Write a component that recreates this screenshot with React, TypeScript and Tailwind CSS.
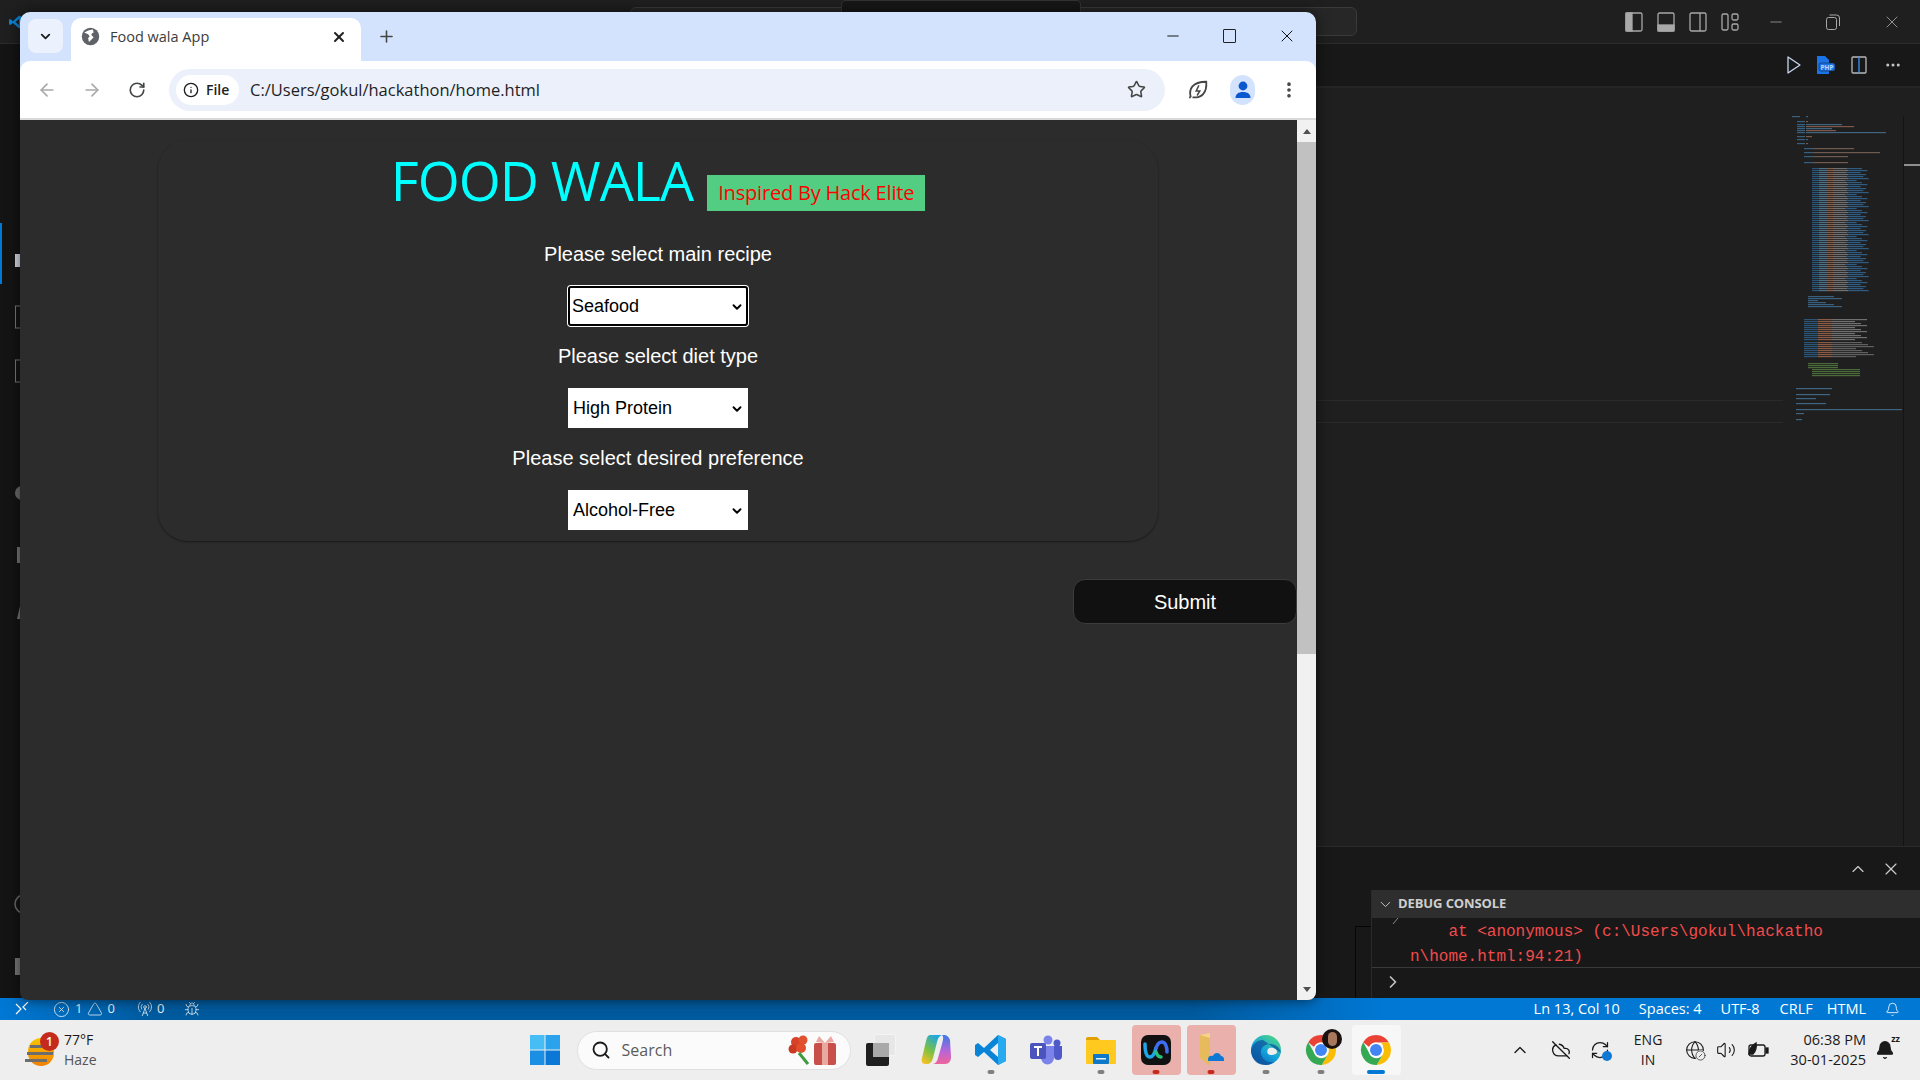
import { ArrowLeft, ArrowRight, RotateCw, Info, Star, X, Plus, ChevronDown, ChevronUp, ChevronRight, Minus, MoreVertical, MoreHorizontal, Search, Bell, CloudOff, RefreshCw, Globe, Volume2, Triangle, XCircle, RadioTower, Bug, CircleSlash } from "lucide-react";

const ui = "font-['Open_Sans',sans-serif]";

function ChromeLogo({ size = 36 }: { size?: number }) {
  return (
    <svg width={size} height={size} viewBox="0 0 48 48">
      <path d="M24 4a20 20 0 0 1 17.3 10H24a10 10 0 0 0-9.2 6L6.9 13.700A20 20 0 0 1 24 4z" fill="#ea4335" />
      <path d="M41.300 14A20 20 0 0 1 25 44l8.600-15A10 10 0 0 0 33.500 21 10 10 0 0 0 31 14z" fill="#fbbc04" />
      <path d="M6.900 13.700A20 20 0 0 0 25 44l8.600-15A10 10 0 0 1 15 28z" fill="#34a853" />
      <circle cx="24" cy="24" r="10" fill="#fff" />
      <circle cx="24" cy="24" r="8" fill="#4285f4" />
    </svg>
  );
}

function Minimap() {
  const rows: React.ReactNode[] = [];
  const bar = (x: number, y: number, w: number, c: string) => <rect key={`${x}-${y}-${c}`} x={x} y={y} width={w} height="1.2" fill={c} />;
  const widths = [14, 10, 18, 12, 16, 9, 20, 13, 11, 17, 15, 8, 19, 12];
  // header block
  [[0, 14], [5, 8], [8, 50], [10, 62], [12, 40], [14, 44], [16, 94], [20, 20], [23, 12], [27, 6]].forEach(([y, w], i) => {
    rows.push(bar(i < 1 ? 0 : 5, y, 8, "#3a6080"));
    rows.push(bar(14, y, Math.max(w - 14, 2), i % 2 ? "#7d5848" : "#3f6580"));
  });
  [[32, 40], [36, 66], [40, 34], [46, 34]].forEach(([y, w]) => {
    rows.push(bar(12, y, 10, "#3a6080"));
    rows.push(bar(22, y, w, "#6f5a50"));
  });
  // main option table
  for (let y = 52; y < 176; y += 2) {
    const w = widths[y % 14];
    rows.push(bar(20, y, 7, "#2b5577"));
    rows.push(bar(27, y, 8, "#4f7085"));
    rows.push(bar(35, y, 6, "#8a5c48"));
    rows.push(bar(41, y, 9 + w / 3, "#707070"));
    rows.push(bar(50 + w / 3, y, w, "#2f5c80"));
  }
  // lower blocks
  for (let y = 180; y < 192; y += 2) rows.push(bar(16, y, 10 + (y % 8) * 4, "#3a6080"));
  for (let y = 203; y < 224; y += 2) {
    rows.push(bar(12, y, 14, "#2b5577"));
    rows.push(bar(26, y, 14, "#8a5c48"));
    rows.push(bar(40, y, 20 + (y % 6) * 3, "#707070"));
  }
  for (let y = 226; y < 242; y += 2) {
    rows.push(bar(12, y, 14, "#2b5577"));
    rows.push(bar(26, y, 14, "#8a5c48"));
    rows.push(bar(40, y, 24 + (y % 8) * 3, "#606060"));
  }
  for (let y = 247; y < 261; y += 2) rows.push(bar(y < 253 ? 16 : 20, y, y < 253 ? 30 : 48, "#4c6b3a"));
  [[272, 36], [278, 34], [282, 20], [287, 30], [293, 106], [297, 8], [303, 6]].forEach(([y, w]) => rows.push(bar(4, y, w, "#3f6580")));
  return (
    <svg width="111" height="306" viewBox="0 0 111 306">
      {rows}
    </svg>
  );
}

function ActivitySlivers() {
  return (
    <svg width="20" height="954" viewBox="0 0 20 954" className="shrink-0">
      <rect x="0" y="179" width="2" height="61" fill="#0078d4" />
      <rect x="15" y="210" width="5" height="13" fill="#d7dbe6" />
      <rect x="15.500" y="262" width="5" height="22" fill="none" stroke="#7a7a7a" />
      <rect x="15.500" y="316" width="5" height="22" fill="none" stroke="#7a7a7a" />
      <circle cx="22" cy="449" r="7" fill="#6d6d6d" />
      <rect x="17" y="503" width="3" height="16" fill="#7a7a7a" />
      <path d="M20 562l-3 13h3z" fill="#7a7a7a" />
      <circle cx="24" cy="860" r="9" fill="none" stroke="#6d6d6d" strokeWidth="1.5" />
      <rect x="15" y="914" width="5" height="17" fill="#7a7a7a" />
    </svg>
  );
}

function TaskIcon({ children, dot, hi, active }: { children: React.ReactNode; dot?: string; hi?: boolean; active?: boolean }) {
  return (
    <div className="w-[55px] flex justify-center">
      <div className={`relative w-[49px] h-[50px] flex items-center justify-center rounded-[4px] ${hi ? "bg-[#e9b0ac]" : ""} ${active ? "bg-[#f7f7f7]" : ""}`}>
        {children}
        {dot && <span className={`absolute bottom-[1px] left-1/2 -translate-x-1/2 h-[4px] rounded-full ${active ? "w-[18px]" : "w-[7px]"} ${dot}`} />}
      </div>
    </div>
  );
}

function Field({ label, value, options, focused }: { label: string; value: string; options: string[]; focused?: boolean }) {
  return (
    <div className="flex flex-col items-center">
      <label className="text-[20px] leading-[23px] text-white">{label}</label>
      <div className="relative mt-[20px] w-[180px] h-[40px]">
        <select
          defaultValue={value}
          className={`appearance-none w-full h-full bg-white text-black text-[18px] outline-none ${focused ? "border-2 border-black rounded-[3px] ring-1 ring-white pl-[2px]" : "border-0 pl-[5px]"}`}
        >
          {options.map((o) => (
            <option key={o}>{o}</option>
          ))}
        </select>
        <ChevronDown size={14} strokeWidth={3.2} className="absolute right-[4px] top-[14px] text-black pointer-events-none" />
      </div>
    </div>
  );
}

function BrowserWindow() {
  return (
    <div className="absolute left-[20px] top-[12px] w-[1296px] h-[988px] flex flex-col rounded-t-[10px] rounded-b-[8px] overflow-hidden shadow-[0_0_14px_rgba(0,0,0,0.6)]">
      {/* tab strip */}
      <div className={`h-[49px] shrink-0 bg-[#d3e3fd] flex items-start ${ui}`}>
        <div className="ml-[8px] mt-[7px] w-[35px] h-[34px] rounded-[8px] bg-[#ebf1fd] flex items-center justify-center">
          <ChevronDown size={15} strokeWidth={3} className="text-[#1f1f1f]" />
        </div>
        <div className="ml-[8px] mt-[6px] w-[290px] h-[43px] rounded-t-[10px] bg-white flex items-center pl-[10px] pr-[14px] pb-[6px]">
          <svg width="19" height="19" viewBox="0 0 24 24">
            <circle cx="12" cy="12" r="11" fill="#5f6368" />
            <path d="M4 7l5 2 2 3-2 2 1 5 3-3 3-3-3-3 1-2 2-1-1-4-5 1z" fill="#fff" />
          </svg>
          <span className="ml-[10px] flex-1 text-[14.500px] text-[#3c3c3c]">Food wala App</span>
          <X size={16} strokeWidth={3} className="text-[#1f1f1f]" />
        </div>
        <Plus size={19} strokeWidth={2} className="ml-[16px] mt-[15px] text-[#444746]" />
        <div className="flex-1" />
        <div className="flex items-center mt-[14px] mr-[19px] gap-[41px] text-[#111]">
          <Minus size={18} strokeWidth={1.300} />
          <div className="w-[13px] h-[14px] border border-[#222] rounded-[1px]" />
          <X size={20} strokeWidth={1.200} />
        </div>
      </div>
      {/* toolbar */}
      <div className="h-[59px] shrink-0 bg-[#d3e3fd]">
        <div className={`h-full bg-white rounded-t-[10px] border-b-2 border-[#dadada] flex items-center ${ui}`}>
          <ArrowLeft size={20} className="ml-[17px] text-[#a9a9a9]" />
          <ArrowRight size={20} className="ml-[25px] text-[#a9a9a9]" />
          <RotateCw size={18} strokeWidth={2.200} className="ml-[26px] text-[#444746]" />
          <div className="ml-[23px] w-[996px] h-[42px] rounded-full bg-[#ebf0fa] flex items-center pl-[7px] pr-[19px]">
            <div className="w-[63px] h-[30px] rounded-full bg-white flex items-center pl-[7px]">
              <Info size={16} className="text-[#1f1f1f]" />
              <span className="ml-[7px] text-[14px] font-semibold text-[#1f1f1f]">File</span>
            </div>
            <span className="ml-[11px] pt-[1px] flex-1 text-[16.500px] text-[#1f1f1f]">C:/Users/gokul/hackathon/home.html</span>
            <Star size={19} strokeWidth={2} className="text-[#444746]" />
          </div>
          <svg width="22" height="22" viewBox="0 0 24 24" fill="none" stroke="#444746" strokeWidth="2" className="ml-[22px]">
            <path d="M3 21c0-1 1-2 1-2C2 12 5 3 21 3c1 12-5 18-15 17" />
            <path d="M13 7l-3 6h4l-3 5" strokeWidth="1.600" />
          </svg>
          <div className="ml-[21px] w-[25px] h-[30px] rounded-full bg-[#d3e3fd] flex items-center justify-center">
            <svg width="18" height="20" viewBox="0 0 18 20" fill="#0b57d0">
              <circle cx="9" cy="6" r="4.400" />
              <path d="M1.500 18c0-4 3-6 7.500-6s7.500 2 7.500 6z" />
            </svg>
          </div>
          <MoreVertical size={20} strokeWidth={2.400} className="ml-[24px] text-[#444746]" />
        </div>
      </div>
      {/* page */}
      <div className="flex-1 min-h-0 flex bg-[#2c2c2c] font-['Liberation_Sans',sans-serif]">
        <div className="w-[1277px] pt-[20px]">
          <div className="ml-[138px] w-[1000px] h-[401px] rounded-[30px] shadow-[0_1px_2px_rgba(0,0,0,0.45)] flex flex-col items-center pt-[9px]">
            <div className="flex items-end gap-[14px]">
              <h1 className="font-['Open_Sans',sans-serif] text-[54px] leading-[62px] text-[#00ffff] tracking-[-1px]">FOOD WALA</h1>
              <span className="mb-[0px] w-[218px] h-[36px] bg-[#52cd82] flex items-center justify-center font-['Open_Sans',sans-serif] text-[20px] text-[#ff0000] tracking-[-0.200px]">
                Inspired By Hack Elite
              </span>
            </div>
            <div className="mt-[32px] flex flex-col gap-[19px] items-center">
              <Field label="Please select main recipe" value="Seafood" options={["Seafood", "Chicken", "Vegetarian"]} focused />
              <Field label="Please select diet type" value="High Protein" options={["High Protein", "Low Carb", "Balanced"]} />
              <Field label="Please select desired preference" value="Alcohol-Free" options={["Alcohol-Free", "Gluten-Free", "Dairy-Free"]} />
            </div>
          </div>
          <div className="mt-[38px] flex justify-end">
            <button className="w-[224px] h-[45px] rounded-[12px] bg-[#111111] border border-[#3c3c3c] text-white text-[20px]">Submit</button>
          </div>
        </div>
        <div className="w-[19px] bg-[#f1f1f1] flex flex-col items-center">
          <div className="h-[22px] flex items-center">
            <div className="w-0 h-0 border-x-[4px] border-x-transparent border-b-[5px] border-b-[#505050]" />
          </div>
          <div className="w-full h-[512px] bg-[#c1c1c1]" />
          <div className="flex-1" />
          <div className="h-[22px] flex items-center">
            <div className="w-0 h-0 border-x-[4px] border-x-transparent border-t-[5px] border-t-[#505050]" />
          </div>
        </div>
      </div>
    </div>
  );
}

export default function App() {
  return (
    <div className={`relative w-[1920px] h-[1080px] overflow-hidden flex flex-col bg-[#1f1f1f] ${ui}`}>
      {/* vscode title bar */}
      <div className="h-[44px] shrink-0 bg-[#1f1f1f] border-b border-[#2b2b2b] flex items-center relative">
        <svg width="14" height="14" viewBox="0 0 32 32" className="ml-[9px]">
          <path d="M23 1l8 4v22l-8 4L9 18l-6 5-3-2V11l3-2 6 5zM23 9l-8 7 8 7z" fill="#0a84d6" />
        </svg>
        <div className="absolute left-[630px] top-[7px] w-[727px] h-[29px] rounded-[6px] bg-[#272727] border border-[#3a3a3a]" />
        <div className="absolute left-[841px] top-0 w-[240px] h-[16px] rounded-[4px] bg-[#171717] border border-[#333]" />
        <div className="ml-auto flex items-center h-full text-[#a8a8a8]">
          <div className="flex items-center gap-[14px] mr-[28px]">
            <svg width="18" height="20" viewBox="0 0 18 20" fill="none" stroke="#a8a8a8" strokeWidth="1.300"><rect x="1" y="1" width="16" height="18" rx="1.500" /><rect x="1" y="1" width="6" height="18" fill="#a8a8a8" /></svg>
            <svg width="18" height="20" viewBox="0 0 18 20" fill="none" stroke="#a8a8a8" strokeWidth="1.300"><rect x="1" y="1" width="16" height="18" rx="1.500" /><rect x="1" y="13" width="16" height="6" fill="#a8a8a8" /></svg>
            <svg width="18" height="20" viewBox="0 0 18 20" fill="none" stroke="#a8a8a8" strokeWidth="1.300"><rect x="1" y="1" width="16" height="18" rx="1.500" /><path d="M11 1v18" /></svg>
            <svg width="18" height="20" viewBox="0 0 18 20" fill="none" stroke="#a8a8a8" strokeWidth="1.300"><rect x="1" y="2" width="6" height="16" rx="1.500" /><rect x="11" y="2" width="6" height="6" rx="1.500" /><rect x="11" y="12" width="6" height="6" rx="1.500" /></svg>
          </div>
          <Minus size={18} strokeWidth={1} className="mr-[41px]" />
          <svg width="14" height="16" viewBox="0 0 14 16" fill="none" stroke="#a8a8a8" className="mr-[42px]"><rect x="0.500" y="3.500" width="10" height="12" rx="2" /><path d="M3.500 1h7a3 3 0 0 1 3 3v8" /></svg>
          <X size={20} strokeWidth={1} className="mr-[18px]" />
        </div>
      </div>
      {/* vscode body */}
      <div className="flex-1 min-h-0 flex bg-[#141414]">
        <ActivitySlivers />
        <div className="flex-1 min-w-0 flex flex-col">
          <div className="h-[44px] shrink-0 bg-[#181818] border-b-2 border-[#252525] flex items-center justify-end pr-[18px] text-[#c5c5c5]">
            <svg width="16" height="20" viewBox="0 0 16 20" fill="none" stroke="#c8d8f0" strokeWidth="1.300" strokeLinejoin="round"><path d="M2 2l12 8-12 8z" /></svg>
            <svg width="20" height="20" viewBox="0 0 20 20" className="ml-[14px]">
              <path d="M1 1h8l4 4v14H1z" fill="#1a73e8" />
              <rect x="3" y="8" width="16" height="8" rx="2" fill="#1a73e8" stroke="#181818" strokeWidth="0.500" />
              <text x="11" y="14.500" fontSize="6.500" fontWeight="700" textAnchor="middle" fill="#bcd8ff">PHP</text>
            </svg>
            <svg width="16" height="18" viewBox="0 0 16 18" fill="none" stroke="#b8b8b8" strokeWidth="1.300" className="ml-[15px]"><rect x="1" y="1" width="14" height="16" rx="1" /><path d="M8 1v16" stroke="#3794ff" /></svg>
            <MoreHorizontal size={18} className="ml-[17px]" />
          </div>
          <div className="flex-1 min-h-0 bg-[#1f1f1f] flex justify-end relative">
            <div className="absolute left-0 right-[137px] top-[312px] h-[23px] border-y border-[#2a2a2a]" />
            <div className="pt-[28px]"><Minimap /></div>
            <div className="w-[17px] border-l border-[#141414] mt-[28px]">
              <div className="mt-[48px] h-[2px] bg-[#8f8f8f]" />
            </div>
          </div>
          <div className="h-[152px] shrink-0 bg-[#181818] border-t border-[#2b2b2b] flex flex-col">
            <div className="h-[43px] flex items-center justify-end gap-[13px] pr-[19px] text-[#cccccc]">
              <ChevronUp size={20} strokeWidth={1.400} />
              <X size={20} strokeWidth={1.400} />
            </div>
            <div className="flex-1 flex min-h-0">
              <div className="w-[1351px] shrink-0 flex justify-end pt-[36px]">
                <div className="w-[16px] border-l border-t border-[#050505]" />
              </div>
              <div className="flex-1 min-w-0 flex flex-col border-l border-[#2b2b2b]">
                <div className="h-[28px] shrink-0 bg-[#2e2e2e] flex items-center pl-[5px]">
                  <ChevronDown size={17} strokeWidth={1.400} className="text-[#c5c5c5]" />
                  <span className="ml-[4px] text-[13px] font-bold tracking-[-0.100px] text-[#cfcfcf]">DEBUG CONSOLE</span>
                </div>
                <div className="relative h-[50px] shrink-0 border-b border-[#3a3a3a] pl-[38px] pt-[2px] font-['Liberation_Mono',monospace] text-[16px] leading-[25px] text-[#f14c4c] whitespace-pre">
                  <svg width="8" height="8" viewBox="0 0 8 8" fill="none" stroke="#8a8a8a" className="absolute left-[20px] top-0"><path d="M6 0L1 6" /></svg>
                  {"    at <anonymous> (c:\\Users\\gokul\\hackatho"}
                  <br />
                  {"n\\home.html:94:21)"}
                </div>
                <div className="flex-1 flex items-center pl-[11px] pb-[2px]">
                  <ChevronRight size={20} strokeWidth={2} className="text-[#c5c5c5]" />
                </div>
              </div>
            </div>
          </div>
        </div>
      </div>
      {/* vscode status bar */}
      <div className="h-[22px] shrink-0 bg-[linear-gradient(90deg,#0078d4_0%,#005a9e_8%,#005a9e_62%,#0078d4_72%,#0078d4_100%)] flex items-center text-[13px] text-[#e6f0f8]">
        <svg width="14" height="14" viewBox="0 0 14 14" fill="none" stroke="#fff" strokeWidth="1.200" className="ml-[15px]"><path d="M1 2l5 5-5 5M13 0L8 5l3 3" /></svg>
        <XCircle size={17} strokeWidth={1.200} className="ml-[24px]" />
        <span className="ml-[5px]">1</span>
        <Triangle size={16} strokeWidth={1.200} className="ml-[5px]" />
        <span className="ml-[4px]">0</span>
        <RadioTower size={16} strokeWidth={1.200} className="ml-[22px]" />
        <span className="ml-[4px]">0</span>
        <Bug size={16} strokeWidth={1.200} className="ml-[20px]" />
        <div className="ml-auto flex items-center text-white text-[14.500px]">
          <span>Ln 13, Col 10</span>
          <span className="ml-[19px]">Spaces: 4</span>
          <span className="ml-[19px]">UTF-8</span>
          <span className="ml-[20px]">CRLF</span>
          <span className="ml-[14px]">HTML</span>
          <Bell size={15} strokeWidth={1.300} className="ml-[19px] mr-[20px]" />
        </div>
      </div>
      {/* windows taskbar */}
      <div className="h-[60px] shrink-0 bg-[#eeeeee] flex items-center relative">
        <div className="relative ml-[25px] w-[32px] h-[34px]">
          <div className="absolute left-[3px] top-[5px] w-[26px] h-[28px] rounded-full bg-[linear-gradient(#f8c600,#f08000)]" />
          <div className="absolute left-[5px] top-[12px] w-[22px] h-[3px] bg-[#6d6d6d]" />
          <div className="absolute left-[2px] top-[19px] w-[26px] h-[3px] bg-[#6d6d6d]" />
          <div className="absolute left-0 top-[26px] w-[22px] h-[3px] bg-[#6d6d6d]" />
          <div className="absolute left-[15px] top-[-1px] w-[19px] h-[19px] rounded-full bg-[#c42b1c] text-white text-[12px] font-semibold leading-[19px] text-center">1</div>
        </div>
        <div className="ml-[7px] flex flex-col text-[14px] leading-[20px]">
          <span className="text-[#1a1a1a]">77°F</span>
          <span className="text-[#555]">Haze</span>
        </div>
        <svg width="30" height="30" viewBox="0 0 30 30" className="ml-[433px]">
          <rect x="0" y="0" width="14.500" height="14.500" fill="#47bdf5" />
          <rect x="15.500" y="0" width="14.500" height="14.500" fill="#2aa3ec" />
          <rect x="0" y="15.500" width="14.500" height="14.500" fill="#1a8fe3" />
          <rect x="15.500" y="15.500" width="14.500" height="14.500" fill="#0a78d4" />
        </svg>
        <div className="ml-[17px] w-[274px] h-[39px] rounded-full bg-[#fbfbfb] border border-[#e0e0e0] flex items-center pl-[13px]">
          <Search size={20} strokeWidth={2.200} className="text-[#1a1a1a]" />
          <span className="ml-[11px] text-[16px] text-[#5c5c5c]">Search</span>
          <svg width="50" height="34" viewBox="0 0 50 34" className="ml-auto mr-[13px]">
            <circle cx="9" cy="9" r="5" fill="#d8412a" /><circle cx="16" cy="7" r="4.500" fill="#e0512f" /><circle cx="6" cy="16" r="4.500" fill="#c93a22" /><circle cx="14" cy="15" r="5" fill="#e34e2c" />
            <path d="M12 20l9 11" stroke="#3e9b3e" strokeWidth="3" />
            <rect x="27" y="10" width="22" height="22" rx="2" fill="#c8504b" />
            <rect x="35" y="10" width="6" height="22" fill="#e9a9a0" />
            <path d="M38 10l-6-7-3 6zM38 10l6-7 3 6z" fill="#e9a9a0" />
          </svg>
        </div>
        <div className="ml-[3px] flex items-center h-full">
          <TaskIcon>
            <div className="relative w-[30px] h-[32px]">
              <div className="absolute left-0 bottom-0 w-[23px] h-[23px] bg-[#1f1f1f] rounded-[2px]" />
              <div className="absolute right-0 top-0 w-[22px] h-[22px] bg-[#e7e7e7] border border-[#f4f4f4] rounded-[2px]" />
              <div className="absolute left-[7px] top-[9px] w-[16px] h-[14px] bg-[#a9a9a9]" />
            </div>
          </TaskIcon>
          <TaskIcon>
            <svg width="30" height="32" viewBox="0 0 30 32">
              <defs>
                <linearGradient id="cpa" x1="0.700" y1="0" x2="0.200" y2="1"><stop offset="0" stopColor="#1aa6e8" /><stop offset=".55" stopColor="#7ac143" /><stop offset="1" stopColor="#f6c026" /></linearGradient>
                <linearGradient id="cpb" x1="0.500" y1="0" x2="0.500" y2="1"><stop offset="0" stopColor="#3a7be8" /><stop offset=".55" stopColor="#b765d8" /><stop offset="1" stopColor="#f0649a" /></linearGradient>
              </defs>
              <path d="M9 1h12c-3 1-4 3-5 7l-4 16c-1 4-3 6-6 6H4c-3 0-4-3-3-6l4-17c1-4 2-6 4-6z" fill="url(#cpa)" />
              <path d="M21 1h2c3 0 5 2 6 5l1 17c0 4-2 7-6 7H11c3 0 5-2 6-6l4-14c1-4 2-7 0-9z" fill="url(#cpb)" />
            </svg>
          </TaskIcon>
          <TaskIcon dot="bg-[#7f7f7f]">
            <svg width="32" height="32" viewBox="0 0 32 32">
              <path d="M23 1l8 4v22l-8 4L9 18l-6 5-3-2V11l3-2 6 5zM23 9l-8 7 8 7z" fill="#0a84d6" />
              <path d="M23 1l8 4v22l-8 4z" fill="#27aaf0" />
            </svg>
          </TaskIcon>
          <TaskIcon>
            <svg width="32" height="30" viewBox="0 0 32 30">
              <circle cx="18" cy="5" r="4.500" fill="#7b83eb" /><circle cx="27" cy="8" r="3.500" fill="#5059c9" />
              <path d="M11 11h13v12a6.500 6.500 0 0 1-13 0z" fill="#7b83eb" /><path d="M24 11h8v10a4 4 0 0 1-8 0z" fill="#5059c9" />
              <rect x="0" y="8" width="16" height="16" rx="2" fill="#4b53bc" />
              <path d="M4 11h8v2H9v8H7v-8H4z" fill="#fff" />
            </svg>
          </TaskIcon>
          <TaskIcon dot="bg-[#7f7f7f]">
            <svg width="30" height="28" viewBox="0 0 30 28">
              <path d="M0 3a2 2 0 0 1 2-2h9l3 3h-14z" fill="#e0a000" />
              <rect x="0" y="4" width="30" height="24" rx="1" fill="#ffc91f" />
              <rect x="7" y="18" width="16" height="10" rx="1" fill="#0f78c8" />
              <rect x="10" y="22" width="10" height="1.500" fill="#e6f2fb" />
            </svg>
          </TaskIcon>
          <TaskIcon hi dot="bg-[#c42b1c]">
            <div className="w-[30px] h-[30px] rounded-[7px] bg-[#111] flex items-center justify-center">
              <svg width="26" height="20" viewBox="0 0 26 20" fill="none" strokeWidth="3.500" strokeLinecap="round">
                <path d="M2 4c0 9 2 13 5 13s5-5 6-9" stroke="#1fa4e8" />
                <path d="M13 8c1-3 3-6 6-6s5 4 5 10" stroke="#3f6df2" />
                <path d="M13 12c1 3 2 5 5 5" stroke="#27c27a" />
              </svg>
            </div>
          </TaskIcon>
          <TaskIcon hi dot="bg-[#c42b1c]">
            <svg width="26" height="38" viewBox="0 0 26 38">
              <path d="M2 4l10-2v30l-10-5z" fill="#f4d488" />
              <path d="M2 4l10 3v28l-10-8z" fill="#e7bb5c" />
              <path d="M10 28c0-3 3-4 5-3 1-4 7-4 8 0 2 0 3 2 3 3v2H10z" fill="#0f78d4" />
            </svg>
          </TaskIcon>
          <TaskIcon dot="bg-[#7f7f7f]">
            <svg width="32" height="32" viewBox="0 0 32 32">
              <defs><linearGradient id="ed" x1="0.800" y1="0.100" x2="0.200" y2="1"><stop offset="0" stopColor="#46d08f" /><stop offset=".5" stopColor="#14a3dc" /><stop offset="1" stopColor="#0a5fb4" /></linearGradient></defs>
              <circle cx="16" cy="16" r="15" fill="url(#ed)" />
              <path d="M31 19c-1-6-6-9-12-9-6 1-9 5-8 10 1 6 7 9 13 8-3 2-6 3-9 3C7 31 1 25 1 16 3 9 8 6 13 6" fill="#0d4f99" opacity="0.700" />
              <path d="M19 14c4-1 8 1 8 4 0 2-3 3-6 3-4 0-5-4-2-7z" fill="#eeeeee" />
            </svg>
          </TaskIcon>
          <TaskIcon dot="bg-[#7f7f7f]">
            <div className="relative">
              <ChromeLogo size={36} />
              <div className="absolute right-[-3px] top-[-3px] w-[20px] h-[20px] rounded-full bg-[#1a1210] flex items-center justify-center">
                <div className="w-[9px] h-[14px] rounded-full bg-[#a8775c]" />
              </div>
            </div>
          </TaskIcon>
          <TaskIcon active dot="bg-[#0078d4]">
            <ChromeLogo size={36} />
          </TaskIcon>
        </div>
        <div className="ml-auto flex items-center text-[#1a1a1a]">
          <ChevronUp size={20} strokeWidth={1.600} />
          <CloudOff size={20} strokeWidth={1.600} className="ml-[21px]" />
          <div className="relative ml-[18.500px]">
            <RefreshCw size={20} strokeWidth={1.500} />
            <div className="absolute right-[-2px] bottom-[-1px] w-[10px] h-[10px] rounded-full bg-[#0f78d4]" />
          </div>
          <div className="ml-[24px] flex flex-col items-center text-[14px] leading-[20px]">
            <span>ENG</span>
            <span>IN</span>
          </div>
          <div className="relative ml-[23px]">
            <Globe size={20} strokeWidth={1.300} />
            <CircleSlash size={11} strokeWidth={1.500} className="absolute right-[-1px] bottom-[-1px] bg-[#eeeeee] rounded-full" />
          </div>
          <Volume2 size={20} strokeWidth={1.300} className="ml-[11px]" />
          <svg width="22" height="20" viewBox="0 0 22 20" fill="none" stroke="#1a1a1a" strokeWidth="1.300" className="ml-[11px]">
            <rect x="2" y="5" width="16" height="11" rx="2" />
            <rect x="19" y="8" width="2" height="5" fill="#1a1a1a" />
            <path d="M2 14c0-6 3-8 7-11 1 5-1 9-3 11z" fill="#1a1a1a" />
          </svg>
          <div className="ml-[21px] flex flex-col items-end text-[14.500px] leading-[20px]">
            <span>06:38 PM</span>
            <span>30-01-2025</span>
          </div>
          <div className="relative ml-[9px] mr-[25px]">
            <Bell size={20} fill="#1a1a1a" strokeWidth={1.400} />
            <span className="absolute right-[-5px] top-[-8px] text-[9px] font-bold">zz</span>
          </div>
        </div>
      </div>
      <BrowserWindow />
    </div>
  );
}
